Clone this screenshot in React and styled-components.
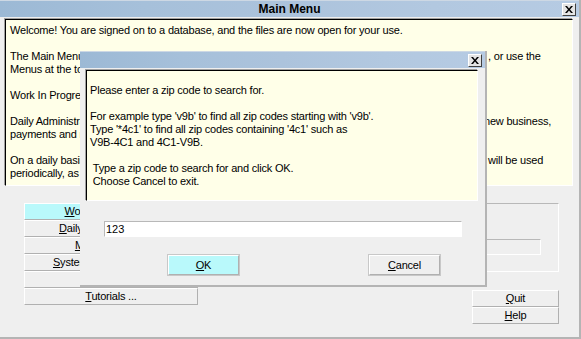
import styled, { createGlobalStyle } from "styled-components"

const Global = createGlobalStyle`
  html, body {
    margin: 0;
    padding: 0;
    background: #efefef;
  }
  body {
    font-family: "Liberation Sans", Arial, sans-serif;
    font-size: 11px;
    letter-spacing: -0.2px;
    color: #000;
  }
`

function CloseIcon() {
    return (
        <svg width="8" height="7" viewBox="0 0 8 7">
            <path d="M0 0h2l2 2.5L6 0h2L5 3.5 8 7H6L4 4.5 2 7H0l3-3.5z" fill="#000" />
        </svg>
    )
}

export default function App()
{
    return (
    <Window>
        <Global />
        <TitleBar>
            <Title>Main Menu</Title>
            <CloseBox><CloseIcon /></CloseBox>
        </TitleBar>

        <Notes>
            <p>Welcome! You are signed on to a database, and the files are now open for your use.</p>
            <p>
                <Line>
                    <Head $w={478}>The Main Menu gives you access to every part of the system. Click a button below with the mouse</Head>
                    , or use the
                </Line>
                <Line>Menus at the top of the screen to open a form.</Line>
            </p>
            <p>Work In Progress shows the jobs that are currently open.</p>
            <p>
                <Line>
                    <Head $w={474}>Daily Administration is used for the day to day running of the office, for tasks such as entering</Head>
                    new business,
                </Line>
                <Line>payments and receipts.</Line>
            </p>
            <p>
                <Line>
                    <Head $w={478}>On a daily basis you will mostly use Daily Administration. The other menus in the system</Head>
                    will be used
                </Line>
                <Line>periodically, as required.</Line>
            </p>
        </Notes>

        <Lower>
            <ButtonColumn>
                <MenuButton $active><u>W</u>ork In Progress ...</MenuButton>
                <MenuButton><u>D</u>aily Administration ...</MenuButton>
                <MenuButton><u>M</u>aintenance ...</MenuButton>
                <MenuButton><u>S</u>ystem Administration ...</MenuButton>
                <MenuButton><u>I</u>nquiries ...</MenuButton>
                <MenuButton><u>T</u>utorials ...</MenuButton>
            </ButtonColumn>
            <RightSide>
                <GroupBox>
                    <Field />
                </GroupBox>
                <SmallButtons>
                    <MenuButton><u>Q</u>uit</MenuButton>
                    <MenuButton><u>H</u>elp</MenuButton>
                </SmallButtons>
            </RightSide>
        </Lower>

        <Dialog>
            <TitleBar>
                <CloseBox><CloseIcon /></CloseBox>
            </TitleBar>
            <Prompt>
                <p>Please enter a zip code to search for.</p>
                <p>
                    <Line>For example type 'v9b' to find all zip codes starting with 'v9b'.</Line>
                    <Line>Type '*4c1' to find all zip codes containing '4c1' such as</Line>
                    <Line>V9B-4C1 and 4C1-V9B.</Line>
                </p>
                <p>
                    <Line>&nbsp;Type a zip code to search for and click OK.</Line>
                    <Line>&nbsp;Choose Cancel to exit.</Line>
                </p>
            </Prompt>
            <Input defaultValue="123" />
            <DialogButtons>
                <DialogButton $active><u>O</u>K</DialogButton>
                <DialogButton><u>C</u>ancel</DialogButton>
            </DialogButtons>
        </Dialog>
    </Window>)
}

const Window = styled.div`
    position: relative;
    width: 581px;
    height: 339px;
    box-sizing: border-box;
    background: #efefef;
    border-right: 2px solid #b4b4b4;
    border-bottom: 2px solid #b4b4b4;
    overflow: hidden;
`

const TitleBar = styled.div`
    position: relative;
    height: 17px;
    display: flex;
    align-items: center;
    justify-content: center;
    background: linear-gradient(90deg, #9cb9d5 0%, #a6c0da 25%, #acc3dc 50%, #b2c8e0 75%, #b6cbe3 100%);
    border-top: 1px solid #cdd8e4;
    box-sizing: border-box;
`

const Title = styled.div`
    font-weight: bold;
    font-size: 12px;
    letter-spacing: 0;
`

const CloseBox = styled.div`
    position: absolute;
    right: 3px;
    top: 2px;
    width: 14px;
    height: 13px;
    box-sizing: border-box;
    display: flex;
    align-items: center;
    justify-content: center;
    background: #e4e4e4;
    border: 1px solid;
    border-color: #ffffff #404040 #404040 #ffffff;
`

const Notes = styled.div`
    margin: 2px 6px 0 5px;
    height: 167px;
    box-sizing: border-box;
    background: #ffffe8;
    border: 1px solid;
    border-color: #000 #fff #fff #000;
    box-shadow: -1px -1px 0 #a0a0a0;
    padding: 4px 4px;
    line-height: 13px;
    overflow: hidden;

    p {
        margin: 0 0 13px 0;
        white-space: nowrap;
    }
`

const Line = styled.span`
    display: flex;
    white-space: pre;
`

const Head = styled.span`
    display: block;
    flex: none;
    width: ${p => p.$w}px;
    overflow: hidden;
    white-space: nowrap;
`

const Lower = styled.div`
    display: flex;
    padding: 17px 20px 0 24px;
`

const ButtonColumn = styled.div`
    width: 174px;
    display: flex;
    flex-direction: column;
`

const MenuButton = styled.div`
    height: 17px;
    box-sizing: border-box;
    text-align: center;
    line-height: 15px;
    background: ${p => p.$active ? "#b9f9fb" : "#efefef"};
    border: 1px solid;
    border-color: #fff #b0b0b0 #b0b0b0 #fff;
`

const RightSide = styled.div`
    flex: 1;
    margin-left: 24px;
    display: flex;
    flex-direction: column;
    align-items: flex-end;
`

const GroupBox = styled.div`
    width: 100%;
    height: 69px;
    box-sizing: border-box;
    border: 1px solid;
    border-color: #b8b8b8 #fff #fff #b8b8b8;
    display: flex;
    justify-content: flex-end;
    padding-right: 17px;
    padding-top: 35px;
`

const Field = styled.div`
    width: 120px;
    height: 16px;
    box-sizing: border-box;
    border: 1px solid;
    border-color: #b8b8b8 #fff #fff #b8b8b8;
`

const SmallButtons = styled.div`
    margin-top: 18px;
    width: 87px;
    display: flex;
    flex-direction: column;
`

const Dialog = styled.div`
    position: absolute;
    left: 80px;
    top: 51px;
    width: 407px;
    height: 236px;
    box-sizing: border-box;
    background: #efefef;
    border-right: 2px solid #b4b4b4;
    border-bottom: 2px solid #b4b4b4;
`

const Prompt = styled.div`
    margin: 2px 7px 0 6px;
    height: 131px;
    box-sizing: border-box;
    background: #ffffe8;
    border: 1px solid;
    border-color: #000 #fff #fff #000;
    box-shadow: -1px -1px 0 #a0a0a0;
    padding: 13px 3px;
    line-height: 13px;

    p {
        margin: 0 0 13px 0;
    }
`

const Input = styled.input`
    display: block;
    margin: 20px 0 0 24px;
    width: 358px;
    height: 16px;
    box-sizing: border-box;
    border: 1px solid;
    border-color: #b8b8b8 #fff #fff #b8b8b8;
    background: #fff;
    padding: 0 1px;
    font: inherit;
    outline: none;
`

const DialogButtons = styled.div`
    display: flex;
    gap: 130px;
    margin: 18px 0 0 88px;
`

const DialogButton = styled.div`
    width: 71px;
    height: 20px;
    box-sizing: border-box;
    text-align: center;
    line-height: 18px;
    background: ${p => p.$active ? "#b9f9fb" : "#efefef"};
    border: 1px solid;
    border-color: #fff #b0b0b0 #b0b0b0 #fff;
    box-shadow: 0 0 0 1px #c8c8c8;
`
